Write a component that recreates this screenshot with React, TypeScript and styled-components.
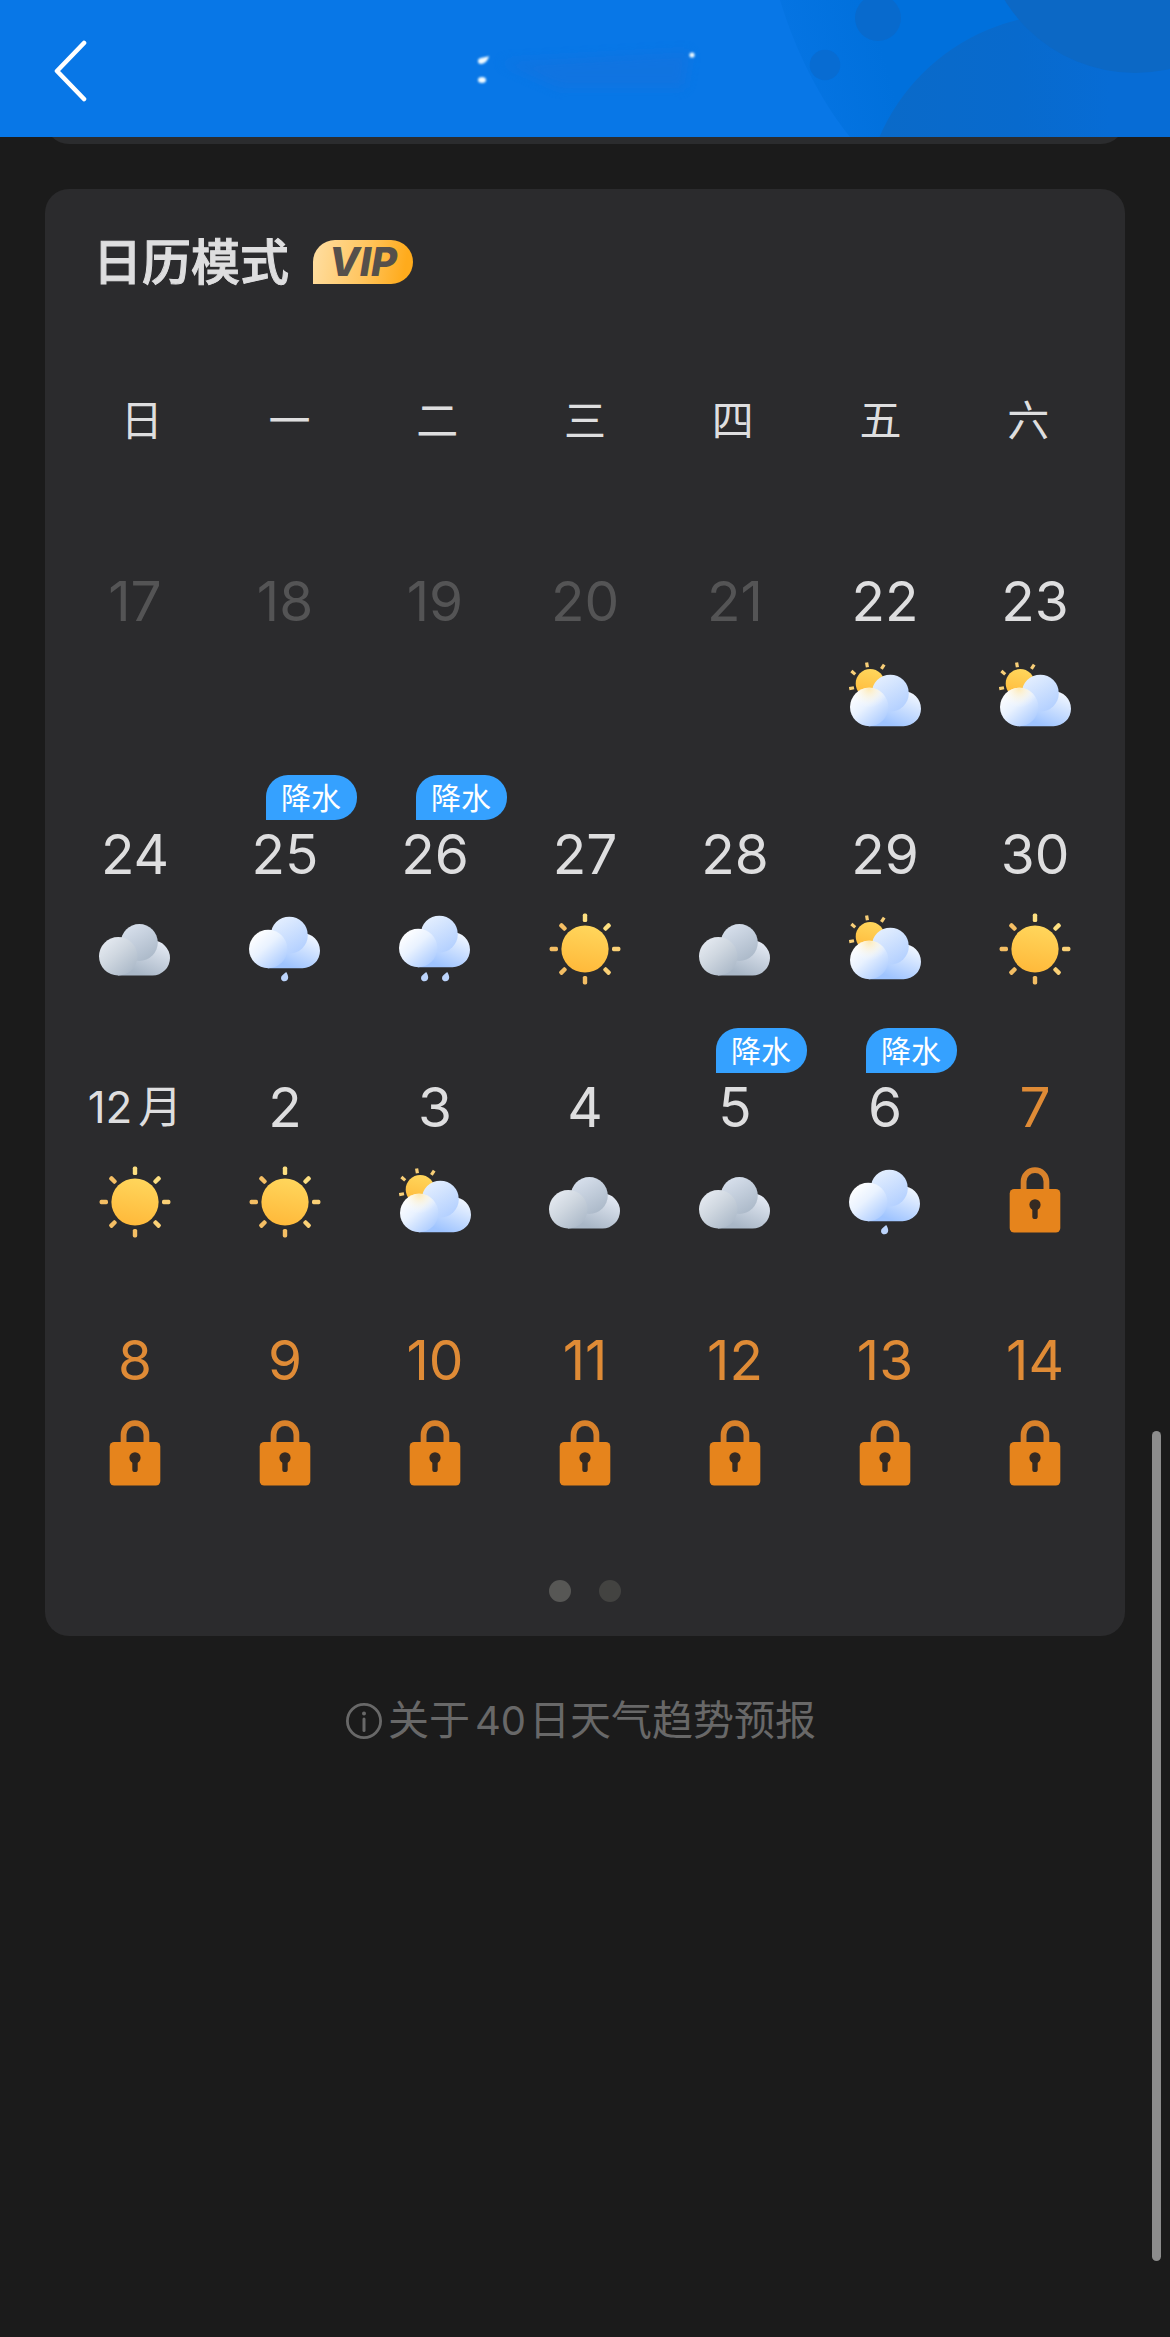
import React, { useState } from "react";
import styled, { createGlobalStyle } from "styled-components";

const GlobalStyle = createGlobalStyle`
  html, body {
    margin: 0;
    background: #1b1b1b;
  }
  body {
    font-family: Inter, "Noto Sans CJK SC", sans-serif;
    color: #dededf;
    -webkit-font-smoothing: antialiased;
  }
  button {
    font: inherit;
    color: inherit;
    border: 0;
    padding: 0;
    background: none;
    cursor: pointer;
  }
`;

const Page = styled.div`
  position: relative;
  min-height: 100vh;
  box-sizing: border-box;
  padding-bottom: 48px;
`;

const Header = styled.header`
  position: sticky;
  top: 0;
  z-index: 2;
  display: flex;
  align-items: center;
  height: 137px;
  box-sizing: border-box;
  padding: 4px 40px 0;
  background: #0877e7;
  overflow: hidden;
`;

const HeaderArt = styled.svg`
  position: absolute;
  top: 0;
  right: 0;
  width: 720px;
  height: 137px;
`;

const BackButton = styled.button`
  position: relative;
  display: flex;
  align-items: center;
  justify-content: center;
  width: 60px;
  height: 72px;
`;

const Main = styled.main`
  padding: 0 45px;
`;

const PreviousCard = styled.div`
  height: 60px;
  margin-top: -53px;
  border-radius: 24px;
  background: #2b2c2e;
`;

const Card = styled.section`
  margin-top: 45px;
  padding: 41px 0 34px;
  border-radius: 24px;
  background: #2b2b2d;
`;

const CardHeader = styled.div`
  display: flex;
  align-items: center;
  gap: 24px;
  height: 64px;
  padding: 0 48px;
`;

const CardTitle = styled.h1`
  margin: 0;
  padding-top: 2px;
  font-size: 49px;
  line-height: 64px;
  font-weight: 500;
  -webkit-text-stroke: 1px currentColor;
`;

const VipBadge = styled.span`
  display: flex;
  align-items: center;
  justify-content: center;
  width: 100px;
  height: 44px;
  border-radius: 22px 22px 22px 0;
  background: linear-gradient(100deg, #ffdc9c 5%, #ffc661 50%, #ffab1c 90%);
  color: #55504b;
  font-size: 40px;
  line-height: 44px;
  font-weight: 800;
  font-style: italic;
`;

const Calendar = styled.table`
  display: block;
  margin-top: 97px;
`;

const WeekHead = styled.thead`
  display: block;
  padding: 0 23px;
`;

const WeekBody = styled.tbody`
  display: flex;
  flex-direction: column;
  gap: 92px;
  margin-top: 120px;
  padding: 0 15px;
`;

const WeekRow = styled.tr`
  display: grid;
  grid-template-columns: repeat(7, 1fr);
`;

const Weekday = styled.th`
  padding: 0;
  text-align: center;
  font-size: 42px;
  line-height: 60px;
  font-weight: 400;
`;

type Tone = "normal" | "past" | "locked";

const toneColor: Record<Tone, string> = {
  normal: "#dededf",
  past: "#545455",
  locked: "#df8b36",
};

const DayCell = styled.td`
  position: relative;
  display: flex;
  flex-direction: column;
  align-items: center;
  gap: 29px;
  height: 161px;
  padding: 0;
`;

const DayLabel = styled.span<{ $tone: Tone; $month?: boolean }>`
  color: ${(p) => toneColor[p.$tone]};
  font-size: ${(p) => (p.$month ? 44 : 55)}px;
  line-height: 60px;
  white-space: nowrap;
`;

const MonthUnit = styled.span`
  margin-left: 6px;
`;

const RainTag = styled.span`
  position: absolute;
  top: -49px;
  left: calc(50% - 19px);
  box-sizing: border-box;
  height: 45px;
  padding: 1px 16px 0 15px;
  border-radius: 22px 22px 22px 0;
  background: #35a1ff;
  color: #fff;
  font-size: 30px;
  line-height: 44px;
  white-space: nowrap;
`;

const Pager = styled.div`
  display: flex;
  justify-content: center;
  gap: 28px;
  margin-top: 89px;
`;

const PagerDot = styled.button<{ $active: boolean }>`
  width: 22px;
  height: 22px;
  border-radius: 50%;
  background: ${(p) => (p.$active ? "#575755" : "#434341")};
`;

const AboutLink = styled.a`
  display: flex;
  align-items: center;
  justify-content: center;
  gap: 6px;
  margin-top: 54px;
  padding-right: 8px;
  color: #686868;
  font-size: 41px;
  line-height: 60px;
  text-decoration: none;
`;

const AboutCount = styled.span`
  margin: 0 3px 0 5px;
  font-size: 40px;
`;

const ScrollThumb = styled.div`
  position: fixed;
  right: 9px;
  bottom: 76px;
  z-index: 3;
  width: 9px;
  height: 830px;
  border-radius: 5px;
  background: #8c8c8c;
`;

type Weather = "sun" | "partly" | "cloud" | "rain1" | "rain2" | "lock";

interface Day {
  label: string;
  tone?: Tone;
  weather?: Weather;
  rain?: boolean;
  month?: boolean;
}

const weekdays = ["日", "一", "二", "三", "四", "五", "六"];

const past = (label: string): Day => ({ label, tone: "past" });
const locked = (label: string): Day => ({ label, tone: "locked", weather: "lock" });

const weeks: Day[][] = [
  [
    past("17"),
    past("18"),
    past("19"),
    past("20"),
    past("21"),
    { label: "22", weather: "partly" },
    { label: "23", weather: "partly" },
  ],
  [
    { label: "24", weather: "cloud" },
    { label: "25", weather: "rain1", rain: true },
    { label: "26", weather: "rain2", rain: true },
    { label: "27", weather: "sun" },
    { label: "28", weather: "cloud" },
    { label: "29", weather: "partly" },
    { label: "30", weather: "sun" },
  ],
  [
    { label: "12", weather: "sun", month: true },
    { label: "2", weather: "sun" },
    { label: "3", weather: "partly" },
    { label: "4", weather: "cloud" },
    { label: "5", weather: "cloud", rain: true },
    { label: "6", weather: "rain1", rain: true },
    locked("7"),
  ],
  ["8", "9", "10", "11", "12", "13", "14"].map(locked),
];

function Gradients() {
  return (
    <svg width="0" height="0" style={{ position: "absolute" }} aria-hidden="true">
      <defs>
        <linearGradient id="sunFill" x1="0.6" y1="0" x2="0.4" y2="1">
          <stop offset="0" stopColor="#ffd65c" />
          <stop offset="1" stopColor="#ffb93a" />
        </linearGradient>
        <linearGradient id="blueBase" x1="1" y1="0.2" x2="0.5" y2="1">
          <stop offset="0" stopColor="#eef5ff" />
          <stop offset="1" stopColor="#9fc4ff" />
        </linearGradient>
        <linearGradient id="blueTop" x1="0.2" y1="0" x2="0.8" y2="1">
          <stop offset="0" stopColor="#e6f0fe" />
          <stop offset="1" stopColor="#b0ceff" />
        </linearGradient>
        <linearGradient id="blueLeft" x1="0.15" y1="0.1" x2="0.9" y2="0.95">
          <stop offset="0" stopColor="#ffffff" />
          <stop offset="0.4" stopColor="#e9f2ff" />
          <stop offset="1" stopColor="#a6c8ff" />
        </linearGradient>
        <linearGradient id="grayBase" x1="1" y1="0.2" x2="0.5" y2="1">
          <stop offset="0" stopColor="#e2e8f2" />
          <stop offset="1" stopColor="#a9b7c7" />
        </linearGradient>
        <linearGradient id="grayTop" x1="0.2" y1="0" x2="0.8" y2="1">
          <stop offset="0" stopColor="#d9e1ed" />
          <stop offset="1" stopColor="#a9b7c7" />
        </linearGradient>
        <linearGradient id="grayLeft" x1="0.15" y1="0.1" x2="0.9" y2="0.95">
          <stop offset="0" stopColor="#e4e9f0" />
          <stop offset="0.4" stopColor="#cfd7e0" />
          <stop offset="1" stopColor="#a9b7c7" />
        </linearGradient>
        <radialGradient id="warmGlow" cx="0.5" cy="0.02" r="0.5">
          <stop offset="0" stopColor="#ffe9b0" stopOpacity="0.95" />
          <stop offset="1" stopColor="#ffffff" stopOpacity="0" />
        </radialGradient>
      </defs>
    </svg>
  );
}

function Cloud({ x, y, tone, glow }: { x: number; y: number; tone: "blue" | "gray"; glow?: boolean }) {
  return (
    <g transform={`translate(${x} ${y})`}>
      <path
        d="M19 51.5 V22 H44 L53.5 16.5 A17.5 17.5 0 0 1 53.5 51.5 Z"
        fill={`url(#${tone}Base)`}
      />
      <circle cx="40.3" cy="18.5" r="18.5" fill={`url(#${tone}Top)`} />
      <circle cx="19.2" cy="32.3" r="19.2" fill={`url(#${tone}Left)`} />
      {glow && <circle cx="19.2" cy="32.3" r="19.2" fill="url(#warmGlow)" />}
    </g>
  );
}

function Drop({ x, y }: { x: number; y: number }) {
  return (
    <path
      transform={`translate(${x} ${y})`}
      d="M5.2 0 C6.6 2.2 7.2 4 7.2 5.6 C7.2 8 5.6 9.3 3.6 9.3 C1.6 9.3 0 8 0 5.9 C0 3.6 2.8 2.2 5.2 0 Z"
      fill="#bcd4fb"
    />
  );
}

function WeatherIcon({ kind }: { kind: Weather }) {
  return (
    <svg width="72" height="72" viewBox="0 0 72 72" aria-hidden="true">
      {kind === "sun" && (
        <>
          <circle cx="36" cy="36" r="23.6" fill="url(#sunFill)" />
          {[0, 45, 90, 135, 180, 225, 270, 315].map((angle) => (
            <rect
              key={angle}
              x="33.8"
              y="0.6"
              width="4.4"
              height="8.4"
              rx="1.6"
              transform={`rotate(${angle} 36 36)`}
              fill={
                angle === 0 || angle === 45 ? "#fddf80" : angle === 90 || angle === 135 ? "#fad076" : "#f4be64"
              }
            />
          ))}
        </>
      )}
      {kind === "partly" && (
        <>
          <circle cx="21.2" cy="23.5" r="14.5" fill="url(#sunFill)" />
          <g stroke="#f8cf78" strokeWidth="3.2">
            <path d="M0.2 28.6 L5 27.7" />
            <path d="M2.4 11 L6.2 14.4" />
            <path d="M17.6 2.4 L18.4 7.2" />
            <path d="M35.2 4.6 L32.4 8.9" />
          </g>
          <Cloud x={1} y={14.7} tone="blue" glow />
        </>
      )}
      {kind === "cloud" && <Cloud x={0} y={11} tone="gray" />}
      {kind === "rain1" && (
        <>
          <Cloud x={0} y={3.7} tone="blue" />
          <Drop x={32} y={59} />
        </>
      )}
      {kind === "rain2" && (
        <>
          <Cloud x={0} y={2.7} tone="blue" />
          <Drop x={22} y={59} />
          <Drop x={43} y={59} />
        </>
      )}
      {kind === "lock" && (
        <>
          <path
            d="M24.6 26 V15.5 A11.4 11.4 0 0 1 47.4 15.5 V26"
            fill="none"
            stroke="#d9822b"
            strokeWidth="5.8"
          />
          <rect x="10.7" y="23" width="50.6" height="43.5" rx="4.5" fill="#e6841c" />
          <circle cx="36" cy="38.8" r="5.6" fill="#352a22" />
          <path d="M36 40 V50.4" stroke="#352a22" strokeWidth="5.4" strokeLinecap="round" />
        </>
      )}
    </svg>
  );
}

function TopBar() {
  return (
    <Header>
      <HeaderArt viewBox="450 0 720 137" aria-hidden="true">
        <defs>
          <linearGradient id="sideShade" gradientUnits="userSpaceOnUse" x1="775" y1="70" x2="880" y2="40">
            <stop offset="0" stopColor="#0675e4" />
            <stop offset="1" stopColor="#0070dc" />
          </linearGradient>
          <linearGradient id="bigDisc" gradientUnits="userSpaceOnUse" x1="880" y1="0" x2="1110" y2="0">
            <stop offset="0" stopColor="#0a6ac9" />
            <stop offset="0.6" stopColor="#086acd" />
            <stop offset="1" stopColor="#076cd5" />
          </linearGradient>
          <filter id="soft" x="-50%" y="-50%" width="200%" height="200%">
            <feGaussianBlur stdDeviation="1" />
          </filter>
          <filter id="smear" x="-20%" y="-50%" width="140%" height="200%">
            <feGaussianBlur stdDeviation="6" />
          </filter>
        </defs>
        <path d="M780 0 H1170 V137 H850 C820 100 795 50 780 0 Z" fill="url(#sideShade)" />
        <path d="M1080 0 H1170 V137 H1080 Z" fill="#066dd7" />
        <circle cx="1066" cy="217" r="203" fill="url(#bigDisc)" />
        <circle cx="1135" cy="-80" r="153" fill="#0c68c5" />
        <circle cx="878" cy="18" r="23" fill="#086acd" />
        <circle cx="825" cy="65" r="15.3" fill="#086cd2" />
        <path d="M500 62 L690 52 L684 88 H560 Z" fill="#1b6fd8" opacity="0.4" filter="url(#smear)" />
        <g fill="#f0fbff" filter="url(#soft)">
          <path d="M478 61 C478 57 484 58 489 56 C488 61 484 64 481 64 C479 64 478 63 478 61 Z" />
          <ellipse cx="482" cy="80" rx="4" ry="3" />
          <circle cx="692" cy="55" r="2.6" />
        </g>
      </HeaderArt>
      <BackButton type="button" aria-label="返回">
        <svg width="36" height="62" viewBox="0 0 36 62" aria-hidden="true">
          <path
            d="M32 3 L5 31 L32 59"
            fill="none"
            stroke="#fff"
            strokeWidth="4.6"
            strokeLinecap="round"
            strokeLinejoin="round"
          />
        </svg>
      </BackButton>
    </Header>
  );
}

export default function App() {
  const [page, setPage] = useState(0);

  return (
    <Page>
      <GlobalStyle />
      <Gradients />
      <TopBar />
      <Main>
        <PreviousCard />
        <Card>
          <CardHeader>
            <CardTitle>日历模式</CardTitle>
            <VipBadge>VIP</VipBadge>
          </CardHeader>
          <Calendar>
            <WeekHead>
              <WeekRow>
                {weekdays.map((name) => (
                  <Weekday key={name} scope="col">
                    {name}
                  </Weekday>
                ))}
              </WeekRow>
            </WeekHead>
            <WeekBody>
              {weeks.map((week, index) => (
                <WeekRow key={index}>
                  {week.map((day) => (
                    <DayCell key={day.label}>
                      <DayLabel $tone={day.tone ?? "normal"} $month={day.month}>
                        {day.label}
                        {day.month && <MonthUnit>月</MonthUnit>}
                      </DayLabel>
                      {day.weather && <WeatherIcon kind={day.weather} />}
                      {day.rain && <RainTag>降水</RainTag>}
                    </DayCell>
                  ))}
                </WeekRow>
              ))}
            </WeekBody>
          </Calendar>
          <Pager>
            {[0, 1].map((index) => (
              <PagerDot
                key={index}
                type="button"
                $active={page === index}
                aria-label={`第${index + 1}页`}
                onClick={() => setPage(index)}
              />
            ))}
          </Pager>
        </Card>
        <AboutLink href="#about">
          <svg width="36" height="36" viewBox="0 0 36 36" aria-hidden="true">
            <circle cx="18" cy="18" r="16.6" fill="none" stroke="#686868" strokeWidth="2.8" />
            <circle cx="18" cy="10.5" r="2" fill="#686868" />
            <path d="M18 16 V27.5" stroke="#686868" strokeWidth="3" strokeLinecap="round" />
          </svg>
          <span>
            关于<AboutCount>40</AboutCount>日天气趋势预报
          </span>
        </AboutLink>
      </Main>
      <ScrollThumb />
    </Page>
  );
}
